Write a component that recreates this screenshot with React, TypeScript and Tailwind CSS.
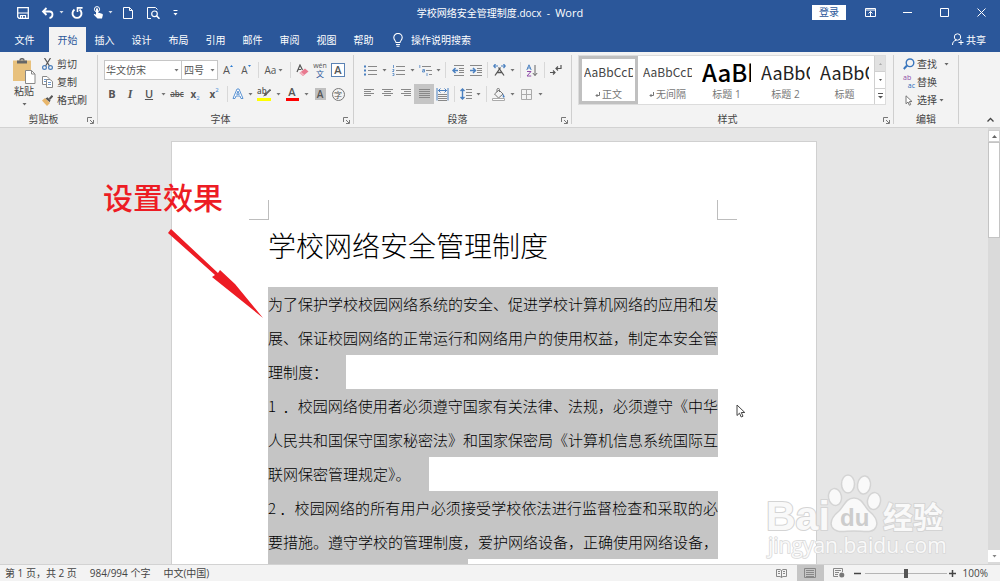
import { useState, type ReactNode } from 'react';
import clsx from 'clsx';

interface ChildrenProps {
  children: ReactNode;
}

interface ToolProps {
  label: string;
  width?: string;
  active?: boolean;
  children: ReactNode;
}

const TABS = ['开始', '插入', '设计', '布局', '引用', '邮件', '审阅', '视图', '帮助'];

const STYLES = [
  { name: '正文', sample: 'AaBbCcDc', size: 'text-[12px] text-[#444]', mark: true },
  { name: '无间隔', sample: 'AaBbCcDc', size: 'text-[12px] text-[#444]', mark: true },
  { name: '标题 1', sample: 'AaBb', size: 'text-[24px] font-medium text-black', mark: false },
  { name: '标题 2', sample: 'AaBbC', size: 'text-[18px] text-[#222]', mark: false },
  { name: '标题', sample: 'AaBbC', size: 'text-[18px] text-[#222]', mark: false },
];

const PARAGRAPHS = [
  [
    '为了保护学校校园网络系统的安全、促进学校计算机网络的应用和发',
    '展、保证校园网络的正常运行和网络用户的使用权益，制定本安全管',
    '理制度：',
  ],
  [
    '1\u00a0 ．校园网络使用者必须遵守国家有关法律、法规，必须遵守《中华',
    '人民共和国保守国家秘密法》和国家保密局《计算机信息系统国际互',
    '联网保密管理规定》。',
  ],
  [
    '2 ．校园网络的所有用户必须接受学校依法进行监督检查和采取的必',
    '要措施。遵守学校的管理制度，爱护网络设备，正确使用网络设备，',
  ],
];

function Svg({ w, h, children }: ChildrenProps & { w: number; h: number }) {
  return (
    <svg width={w} height={h} viewBox={`0 0 ${w} ${h}`} fill="none" stroke="currentColor" aria-hidden="true" className="shrink-0">
      {children}
    </svg>
  );
}

function Caret() {
  return (
    <svg width="5" height="3" viewBox="0 0 5 3" fill="currentColor" aria-hidden="true" className="shrink-0 opacity-80">
      <path d="M.5 0h4L2.500 2.500z" />
    </svg>
  );
}

function Tool({ label, width = 'w-4', active, children }: ToolProps) {
  return (
    <button
      type="button"
      aria-label={label}
      title={label}
      className={clsx('flex h-5 shrink-0 items-center justify-center', width, active && 'bg-[#c5c5c5]')}
    >
      {children}
    </button>
  );
}

function CaretTool({ label }: { label: string }) {
  return (
    <Tool label={label} width="w-2">
      <Caret />
    </Tool>
  );
}

function Divider({ width = 'w-2' }: { width?: string }) {
  return (
    <span className={clsx('flex h-4 shrink-0 justify-center', width)}>
      <span className="w-px bg-[#d8d8d8]" />
    </span>
  );
}

function Row({ children }: ChildrenProps) {
  return <div className="flex h-5 items-center">{children}</div>;
}

function Group({ title, width, launcher = true, children }: ChildrenProps & { title: string; width: string; launcher?: boolean }) {
  return (
    <section aria-label={title} className={clsx('flex shrink-0 pt-[3px]', width)}>
      <div className="flex min-w-0 flex-1 flex-col justify-between">
        {children}
        <div className="flex h-4 items-center">
          <span className="flex-1 text-center">{title}</span>
          {launcher && (
            <button type="button" aria-label={`${title}设置`} className="flex w-[10px] justify-start pt-[3px] text-[#777]">
              <Svg w={7} h={7}>
                <path d="M.5 5V.5H5M3 3l3 3M6.500 3v3.500H3" />
              </Svg>
            </button>
          )}
        </div>
      </div>
      <div className="mb-[3px] w-px bg-[#cfcfcf]" />
    </section>
  );
}

/* lines of 13px wide used by the alignment buttons */
function Lines({ rows }: { rows: [number, number][] }) {
  return (
    <Svg w={13} h={10}>
      {rows.map(([x1, x2], i) => (
        <path key={i} d={`M${x1} ${i * 2 + 0.5}H${x2}`} stroke="#888" />
      ))}
    </Svg>
  );
}

function TitleBar() {
  return (
    <div className="grid h-[27px] grid-cols-[1fr_auto_1fr] pb-[2px] text-white">
      <div className="flex items-center pl-[14px]">
        <Tool label="保存" width="w-[18px]">
          <Svg w={12} h={12}>
            <path d="M.7.700h10.600v10.600H2L.7 10z" strokeWidth="1.300" />
            <path d="M1 6h10M3.500 11V8.500h5V11M5.500 9v2" strokeWidth="1.200" />
          </Svg>
        </Tool>
        <Tool label="撤消" width="w-[30px]">
          <Svg w={13} h={12}>
            <path d="M5.500 1L2 4.500 5.500 8M2 4.500h6.500c4 0 4 6 0 6.500" strokeWidth="1.800" />
          </Svg>
        </Tool>
        <Tool label="撤消选项" width="w-[6px]">
          <span className="-translate-x-1">
            <Caret />
          </span>
        </Tool>
        <Tool label="重复" width="w-[18px]">
          <Svg w={12} h={12}>
            <path d="M3.500 2.600a4.500 4.500 0 1 0 5 0" strokeWidth="1.900" />
            <path d="M6.500 0v5L6.500.900h5z" strokeWidth="1.600" />
          </Svg>
        </Tool>
        <Tool label="触摸/鼠标模式" width="w-[24px]">
          <Svg w={11} h={13}>
            <circle cx="4" cy="3.200" r="2.600" />
            <path d="M3 3.200c0-1.400 2-1.400 2 0V6.500l4 1.200c.8.200 1 1 .8 1.600L9 12.500H4.500L.8 8.800c0-1 1.200-1 2.200 0z" fill="currentColor" stroke="none" />
          </Svg>
        </Tool>
        <span className="-ml-1 flex">
          <CaretTool label="触摸选项" />
        </span>
        <Tool label="新建" width="w-[28px]">
          <Svg w={10} h={12}>
            <path d="M.500.500h6l3 3v8h-9zM6.500.500v3h3" />
          </Svg>
        </Tool>
        <Tool label="打印预览" width="w-[22px]">
          <Svg w={13} h={12}>
            <path d="M4 11.500H.500V.500h8l2 2" />
            <circle cx="7.500" cy="6.800" r="2.800" strokeWidth="1.200" />
            <path d="M9.500 8.800l3 3" strokeWidth="1.600" />
          </Svg>
        </Tool>
        <Tool label="自定义快速访问工具栏" width="w-[22px]">
          <Svg w={5} h={6}>
            <path d="M.5.500h4" />
            <path d="M.5 3h4L2.500 5.500z" fill="currentColor" stroke="none" />
          </Svg>
        </Tool>
      </div>
      <h1 className="self-center whitespace-nowrap">
        学校网络安全管理制度.docx&nbsp; -&nbsp; <span className="text-[11px]">Word</span>
      </h1>
      <div className="flex items-center justify-end">
        <button type="button" className="mr-[6px] h-[15px] w-[34px] bg-white leading-[15px] text-[#2b579a]">
          登录
        </button>
        <Tool label="功能区显示选项" width="w-[37px]">
          <Svg w={11} h={9}>
            <path d="M.5.500h10v8H.500zM.5 2h10M5.500 8V3.500M3.500 5.500l2-2 2 2" />
          </Svg>
        </Tool>
        <Tool label="最小化" width="w-[37px]">
          <Svg w={9} h={1}>
            <path d="M0 .500h9" />
          </Svg>
        </Tool>
        <Tool label="最大化" width="w-[37px]">
          <Svg w={9} h={9}>
            <path d="M.5.500h8v8h-8z" />
          </Svg>
        </Tool>
        <Tool label="关闭" width="w-[37px]">
          <Svg w={9} h={9}>
            <path d="M.5.500l8 8M8.500.500l-8 8" />
          </Svg>
        </Tool>
      </div>
    </div>
  );
}

function TabBar({ active, onSelect }: { active: string; onSelect: (tab: string) => void }) {
  return (
    <nav className="flex h-[25px] items-stretch text-white">
      <button type="button" className="w-[49px]">
        文件
      </button>
      {TABS.map((tab) => (
        <button
          key={tab}
          type="button"
          onClick={() => onSelect(tab)}
          className={clsx('w-[37px]', tab === active && 'bg-[#f3f3f3] text-[#2b579a]')}
        >
          {tab}
        </button>
      ))}
      <button type="button" className="flex items-center gap-2 pl-[11px]">
        <Svg w={10} h={14}>
          <path d="M3 9.500C3 8 .8 7.200.8 4.600a4.200 4.200 0 0 1 8.400 0C9.200 7.200 7 8 7 9.500zM3 11.500h4M3.500 13.300h3" strokeWidth="1.100" />
        </Svg>
        操作说明搜索
      </button>
      <button type="button" className="ml-auto flex items-center gap-[2px] pr-[14px]">
        <Svg w={12} h={13}>
          <circle cx="5.500" cy="4" r="3.200" />
          <path d="M.5 12c0-3 1.500-4.500 4-4.800M9 7v5M6.500 9.500h5" />
        </Svg>
        共享
      </button>
    </nav>
  );
}

function ClipboardGroup() {
  return (
    <Group title="剪贴板" width="w-[98px]">
      <div className="flex">
        <button type="button" className="flex w-[42px] flex-col items-center pt-[3px] pl-[6px] text-[#444]">
          <Svg w={24} h={26}>
            <path d="M1 2.500h18v20.500H1z" fill="#e8c17d" stroke="none" />
            <path d="M5 2.500h10v3H5z" fill="#666" stroke="none" />
            <path d="M8 2.500a2 1.800 0 0 1 4 0" stroke="#666" strokeWidth="1.500" />
            <path d="M13.500 12.500h6l3.500 3.500v9.500h-9.500z" fill="#fff" stroke="#888" />
            <path d="M19.500 12.500V16H23" stroke="#888" />
          </Svg>
          <span className="h-[14px] leading-[14px]">粘贴</span>
          <span className="mt-[5px]">
            <Caret />
          </span>
        </button>
        <div className="flex flex-col">
          <button type="button" className="flex h-[18px] items-center gap-1">
            <Svg w={11} h={12}>
              <path d="M2.500 0l5 8M8.500 0l-5 8" stroke="#555" strokeWidth="1.200" />
              <circle cx="2.500" cy="9.500" r="1.900" stroke="#4a7ebb" strokeWidth="1.200" />
              <circle cx="8.500" cy="9.500" r="1.900" stroke="#4a7ebb" strokeWidth="1.200" />
            </Svg>
            剪切
          </button>
          <button type="button" className="flex h-[18px] items-center gap-1">
            <Svg w={11} h={12}>
              <path d="M.5.500H5l2 2v6H.500z" fill="#fff" stroke="#888" />
              <path d="M2 3.500h3M2 5.500h3" stroke="#6b97cc" />
              <path d="M4.500 3.500H8l2.500 2v6h-6z" fill="#fff" stroke="#888" />
              <path d="M6 6.500h3M6 8.500h3" stroke="#6b97cc" />
            </Svg>
            复制
          </button>
          <button type="button" className="flex h-[18px] items-center gap-1">
            <Svg w={11} h={11}>
              <path d="M0 5.500L3 3l5 5-3 3z" fill="#e8b66b" stroke="none" />
              <path d="M3.500 3.500l2-1.200 3 3-.8 2z" fill="#555" stroke="none" />
              <path d="M7.500 4L10.500.800" stroke="#555" strokeWidth="2" />
            </Svg>
            格式刷
          </button>
        </div>
      </div>
    </Group>
  );
}

function FontGroup() {
  return (
    <Group title="字体" width="w-[256px]">
      <div className="flex flex-col gap-1 pt-[5px] pl-[6px] text-[#555]">
        <Row>
          <label className="relative">
            <span className="sr-only">字体名称</span>
            <select className="h-5 w-[78px] appearance-none border border-[#c6c6c6] bg-white pl-[1px] leading-[18px]">
              <option>华文仿宋</option>
              <option>宋体</option>
            </select>
            <span className="pointer-events-none absolute top-[9px] right-[3px]">
              <Caret />
            </span>
          </label>
          <label className="relative">
            <span className="sr-only">字号</span>
            <select className="h-5 w-9 appearance-none border border-l-0 border-[#c6c6c6] bg-white pl-[2px] leading-[18px]">
              <option>四号</option>
              <option>小四</option>
            </select>
            <span className="pointer-events-none absolute top-[9px] right-[3px]">
              <Caret />
            </span>
          </label>
          <Tool label="增大字号" width="w-5">
            <span className="text-[11px]">A</span>
            <span className="mb-2 text-[#2b7cd3]">
              <Svg w={3} h={2}>
                <path d="M0 2L1.500 0 3 2z" fill="currentColor" stroke="none" />
              </Svg>
            </span>
          </Tool>
          <Tool label="减小字号">
            <span className="text-[10px]">A</span>
            <span className="mb-2 text-[#2b7cd3]">
              <Svg w={3} h={2}>
                <path d="M0 0h3L1.500 2z" fill="currentColor" stroke="none" />
              </Svg>
            </span>
          </Tool>
          <Divider />
          <Tool label="更改大小写" width="w-6">
            <span className="mr-[2px]">Aa</span>
            <Caret />
          </Tool>
          <Divider />
          <Tool label="清除所有格式">
            <Svg w={13} h={13}>
              <path d="M1 8l3-7 2.500 5M2 5.500h3" stroke="#555" strokeWidth="1.200" />
              <path d="M3.500 9L9 4.500l3.500 3L7 12z" fill="#e8798f" stroke="none" />
              <path d="M3.500 9L5 7.700l3.500 3L7 12z" fill="#f3b3bf" stroke="none" />
            </Svg>
          </Tool>
          <Tool label="拼音指南" width="w-5">
            <span className="flex flex-col items-center">
              <span className="text-[7px] leading-[7px]">wén</span>
              <span className="font-['Noto_Sans_CJK_SC',sans-serif] text-[8px] leading-[9px] text-[#2b579a]">文</span>
            </span>
          </Tool>
          <Tool label="字符边框">
            <span className="h-[14px] w-[14px] border border-[#5b83b5] bg-white text-[11px] leading-[12px] font-semibold">A</span>
          </Tool>
        </Row>
        <Row>
          <Tool label="加粗">
            <b className="text-[11px]">B</b>
          </Tool>
          <Tool label="倾斜" width="w-5">
            <i className="font-['Liberation_Serif',serif] text-[12px] font-bold">I</i>
          </Tool>
          <Tool label="下划线" width="w-[18px]">
            <span className="text-[11px] font-semibold underline">U</span>
          </Tool>
          <Tool label="下划线选项" width="w-[10px]">
            <Caret />
          </Tool>
          <Tool label="删除线" width="w-[18px]">
            <span className="text-[8px] font-semibold line-through">abc</span>
          </Tool>
          <Tool label="下标" width="w-[18px]">
            <b>x</b>
            <span className="mt-2 text-[6px] text-[#2b7cd3]">2</span>
          </Tool>
          <Tool label="上标" width="w-5">
            <b>x</b>
            <span className="mb-2 text-[6px] text-[#2b7cd3]">2</span>
          </Tool>
          <Divider width="w-[6px]" />
          <Tool label="文本效果">
            <Svg w={12} h={12}>
              <path d="M1 10.500L5 1h2l4 9.500H9L8 8H4l-1 2.500zM4.700 6.300h2.600L6 3z" fill="#fff" stroke="#5b93d3" />
            </Svg>
          </Tool>
          <CaretTool label="文本效果选项" />
          <Tool label="突出显示" width="w-5">
            <span className="relative flex h-[14px] w-[14px] flex-col justify-between">
              <span className="text-left text-[8px] leading-[8px] font-semibold">ab</span>
              <span className="h-[3px] bg-[#ffff00]" />
              <span className="absolute top-[2px] left-[5px]">
                <Svg w={9} h={8}>
                  <path d="M8.500.500L3 6" stroke="#666" strokeWidth="1.800" />
                  <path d="M3.500 4L1 7.500l4-1.500z" fill="#555" stroke="none" />
                </Svg>
              </span>
            </span>
          </Tool>
          <CaretTool label="突出显示颜色" />
          <Tool label="字体颜色" width="w-5">
            <span className="flex h-[14px] w-[13px] flex-col justify-between">
              <span className="text-[11px] leading-[10px] font-semibold">A</span>
              <span className="h-[3px] bg-[#ff0000]" />
            </span>
          </Tool>
          <CaretTool label="字体颜色选项" />
          <Tool label="字符底纹" width="w-5">
            <span className="h-3 w-[11px] bg-[#bfbfbf] text-[10px] leading-[12px] font-semibold">A</span>
          </Tool>
          <Tool label="带圈字符">
            <span className="h-[13px] w-[13px] rounded-full border border-[#777] text-[8px] leading-[11px]">字</span>
          </Tool>
        </Row>
      </div>
    </Group>
  );
}

function ParagraphGroup() {
  const blue = '#4a80c0';
  return (
    <Group title="段落" width="w-[218px]">
      <div className="flex flex-col gap-1 pt-[5px] pl-[6px] text-[#555]">
        <Row>
          <Tool label="项目符号" width="w-5">
            <Svg w={13} h={11}>
              <path d="M4 1.500h9M4 5.500h9M4 9.500h9" stroke="#888" />
              <path d="M0 1.500h2M0 5.500h2M0 9.500h2" stroke={blue} strokeWidth="2" />
            </Svg>
          </Tool>
          <CaretTool label="项目符号选项" />
          <Tool label="编号" width="w-5">
            <Svg w={13} h={11}>
              <path d="M4 1.500h9M4 5.500h9M4 9.500h9" stroke="#888" />
              <path d="M1.500 0v3M.500 4.500h1.500v1L.500 6.500h1.500M.5 8.500h1.500v2H.500" stroke={blue} strokeWidth=".8" />
            </Svg>
          </Tool>
          <CaretTool label="编号选项" />
          <Tool label="多级列表" width="w-[18px]">
            <Svg w={13} h={11}>
              <path d="M3 1.500h9M7 5.500h6M10 9.500h3" stroke="#888" />
              <path d="M.8 0v3M3.500 4.500h2v2.500h-2V5.700h2M8 8v3" stroke={blue} strokeWidth=".8" />
            </Svg>
          </Tool>
          <CaretTool label="多级列表选项" />
          <Divider width="w-[6px]" />
          <Tool label="减少缩进量" width="w-5">
            <Svg w={12} h={11}>
              <path d="M2 .500h10M7 3.500h5M7 5.500h5M7 7.500h5M2 10.500h10" stroke="#888" />
              <path d="M3.500 3L1 5.500 3.500 8M1 5.500h5" stroke={blue} strokeWidth="1.500" />
            </Svg>
          </Tool>
          <Tool label="增加缩进量">
            <Svg w={12} h={11}>
              <path d="M0 .500h12M7 3.500h5M7 5.500h5M7 7.500h5M0 10.500h12" stroke="#888" />
              <path d="M3 3l2.500 2.500L3 8M0 5.500h5" stroke={blue} strokeWidth="1.500" />
            </Svg>
          </Tool>
          <Divider width="w-[6px]" />
          <Tool label="中文版式" width="w-[18px]">
            <Svg w={13} h={12}>
              <path d="M2 11.500L7.500 3.500M11 11.500L5.500 3.500M4 8.500h5" stroke="#555" strokeWidth="1.300" />
              <path d="M2.500 0L.800 2l1.700 2M.800 2H5M10.500 0l1.700 2-1.700 2M12 2H8" stroke={blue} strokeWidth="1.200" />
            </Svg>
          </Tool>
          <CaretTool label="中文版式选项" />
          <Divider />
          <Tool label="排序">
            <Svg w={12} h={13}>
              <path d="M.8 6L3 .800 5.200 6M1.500 4h3" stroke={blue} />
              <path d="M1 7.500h4L1 12h4.200" stroke="#8e4ba8" />
              <path d="M9 1v10.500M6.800 9L9 11.500 11.200 9" stroke="#666" />
            </Svg>
          </Tool>
          <Divider />
          <Tool label="显示编辑标记">
            <Svg w={12} h={10}>
              <path d="M11 0v3.500H6M8 1.500l-2 2 2 2M0 7.500h5M3 5.500l2 2-2 2" stroke="#555" strokeWidth="1.200" />
            </Svg>
          </Tool>
        </Row>
        <Row>
          <Tool label="左对齐" width="w-[18px]">
            <Lines rows={[[1, 11], [1, 8], [1, 11], [1, 8]]} />
          </Tool>
          <Tool label="居中" width="w-[18px]">
            <Lines rows={[[1, 12], [3, 10], [1, 12], [3, 10]]} />
          </Tool>
          <Tool label="右对齐" width="w-[18px]">
            <Lines rows={[[2, 12], [5, 12], [2, 12], [5, 12]]} />
          </Tool>
          <Tool label="两端对齐" width="w-5" active>
            <Lines rows={[[1, 12], [1, 12], [1, 12], [1, 12], [1, 12]]} />
          </Tool>
          <Tool label="分散对齐">
            <Svg w={13} h={13}>
              <path d="M1 0v12.500M12 0v12.500" stroke={blue} />
              <path d="M2 2.500h9M4.500.500l-2 2 2 2M8.500.500l2 2-2 2" stroke={blue} />
              <path d="M2 6.500h9M2 8.500h9M2 10.500h9M2 12.500h9" stroke="#888" />
            </Svg>
          </Tool>
          <Divider />
          <Tool label="行距">
            <Svg w={12} h={12}>
              <path d="M2.500 1v10M.5 3l2-2 2 2M.5 9l2 2 2-2" stroke={blue} strokeWidth="1.400" />
              <path d="M6 1.500h6M6 4.500h6M6 7.500h6M6 10.500h6" stroke="#888" />
            </Svg>
          </Tool>
          <CaretTool label="行距选项" />
          <Divider />
          <Tool label="底纹" width="w-[18px]">
            <Svg w={14} h={13}>
              <path d="M2.500 6L7 2l4 4-4.500 4zM5 4V1.500C5 0 7.500 0 7.500 1.500V4" stroke="#777" />
              <path d="M11 5.500l1.700 3c0 1.500-2 1.500-2 0z" fill={blue} stroke="none" />
              <path d="M.5 10.500h12v2H.500z" fill="#fff" stroke="#aaa" />
            </Svg>
          </Tool>
          <CaretTool label="底纹选项" />
          <Tool label="边框" width="w-5">
            <Svg w={11} h={11}>
              <path d="M.5.500h10v10H.500zM5.500.500v10M.5 5.500h10" stroke="#aaa" />
            </Svg>
          </Tool>
          <CaretTool label="边框选项" />
        </Row>
      </div>
    </Group>
  );
}

function StylesGroup() {
  return (
    <Group title="样式" width="w-[322px]">
      <div className="ml-[6px] flex h-[50px] w-[308px] border border-[#dcdcdc] bg-white">
        {STYLES.map((style, i) => (
          <button
            key={style.name}
            type="button"
            className={clsx(
              'flex h-12 w-[59px] shrink-0 flex-col justify-between overflow-hidden border-[3px] px-[2px]',
              i === 0 ? 'border-[#c0c0c0]' : 'border-transparent',
            )}
          >
            <span
              className={clsx(
                "flex h-[26px] w-full items-center overflow-hidden font-['Noto_Sans_CJK_SC',sans-serif] leading-[26px] whitespace-nowrap",
                style.size,
              )}
            >
              {style.sample}
            </span>
            <span className="flex h-[14px] w-full items-center justify-center gap-[2px] text-[#777]">
              {style.mark && (
                <Svg w={5} h={5}>
                  <path d="M4.500 0v3.500H1M2.500 2L1 3.500 2.500 5" />
                </Svg>
              )}
              {style.name}
            </span>
          </button>
        ))}
        <div className="flex flex-1 flex-col border-l border-[#d0d0d0] text-[#555]">
          <button type="button" aria-label="上一行" className="flex flex-1 items-center justify-center bg-[#e1e1e1] text-[#aaa]">
            <Svg w={3} h={2}>
              <path d="M0 2L1.500 0 3 2z" fill="currentColor" stroke="none" />
            </Svg>
          </button>
          <button type="button" aria-label="下一行" className="flex flex-1 items-center justify-center border-y border-[#d0d0d0]">
            <Svg w={3} h={2}>
              <path d="M0 0h3L1.500 2z" fill="currentColor" stroke="none" />
            </Svg>
          </button>
          <button type="button" aria-label="其他样式" className="flex flex-1 items-center justify-center">
            <Svg w={5} h={6}>
              <path d="M0 .500h5" />
              <path d="M0 3h5L2.500 5.500z" fill="currentColor" stroke="none" />
            </Svg>
          </button>
        </div>
      </div>
    </Group>
  );
}

function EditingGroup() {
  return (
    <Group title="编辑" width="w-[65px]" launcher={false}>
      <div className="flex flex-col pl-[9px]">
        <button type="button" className="flex h-[18px] items-center gap-[2px]">
          <Svg w={12} h={12}>
            <circle cx="7" cy="4.800" r="3.800" stroke="#3a76bd" strokeWidth="1.400" />
            <path d="M4 7.500L.800 11" stroke="#3a76bd" strokeWidth="2" />
          </Svg>
          查找
          <span className="ml-[5px]">
            <Caret />
          </span>
        </button>
        <button type="button" className="flex h-[18px] items-center gap-[2px]">
          <span className="flex w-3 flex-col text-[7px] leading-[8px]">
            <span className="text-left text-[#8e4ba8]">ab</span>
            <span className="text-right text-[#2b6cb8]">ac</span>
          </span>
          替换
        </button>
        <button type="button" className="flex h-[18px] items-center gap-[2px]">
          <span className="flex w-3 justify-center text-[#777]">
            <Svg w={8} h={11}>
              <path d="M1 .800v8l2-1.800 1.300 3.200 1.400-.600L4.400 6.500H7z" fill="#fff" />
            </Svg>
          </span>
          选择
          <Caret />
        </button>
      </div>
    </Group>
  );
}

function Ribbon() {
  return (
    <div className="flex h-[76px] border-b border-[#d2d2d2] bg-[#f3f3f3] text-[#444]">
      <ClipboardGroup />
      <FontGroup />
      <ParagraphGroup />
      <StylesGroup />
      <EditingGroup />
      <button type="button" aria-label="折叠功能区" className="mt-auto mr-[6px] mb-[5px] ml-auto">
        <Svg w={7} h={5}>
          <path d="M.5 4.500l3-3 3 3" strokeWidth="1.300" />
        </Svg>
      </button>
    </div>
  );
}

function SelectedParagraph({ lines }: { lines: string[] }) {
  return (
    <p>
      {lines.map((line) => (
        <span
          key={line}
          className={clsx(
            'block h-[34px] bg-[#c5c5c5] whitespace-nowrap',
            line.length > 20 ? 'text-justify [text-align-last:justify]' : 'w-fit pr-[18px]',
          )}
        >
          {line}
        </span>
      ))}
    </p>
  );
}

function Annotation() {
  return (
    <div className="absolute top-[32px] -left-[69px] text-[#ed1c24]">
      <p className="text-[30px] leading-[44px] font-medium whitespace-nowrap">设置效果</p>
      <svg width="96" height="90" viewBox="0 0 96 90" fill="currentColor" aria-hidden="true" className="mt-[11px] ml-[65px]">
        <path d="M3 0L50 44l2-3L67 55 95 89 59 60 44 48l3-2L0 4z" />
      </svg>
    </div>
  );
}

function Watermark() {
  return (
    <svg width="184" height="92" viewBox="0 0 184 92" aria-hidden="true" className="pointer-events-none absolute right-[51px] bottom-0">
      <g fill="#f9f9f9" stroke="#d4d4d4" strokeWidth="1.500">
        <ellipse cx="70" cy="25" rx="6.500" ry="8.500" transform="rotate(-10 70 25)" />
        <ellipse cx="83" cy="12" rx="6.500" ry="9" />
        <ellipse cx="99" cy="13" rx="6.500" ry="9" transform="rotate(8 99 13)" />
        <ellipse cx="109" cy="29" rx="6.500" ry="8.500" transform="rotate(10 109 29)" />
        <path d="M89 26c8 0 10 8 15 13 6 5 10 10 7 16-3 7-12 4-22 4s-18 3-22-4c-3-6 1-11 7-16 5-5 7-13 15-13z" />
      </g>
      <g fill="#f9f9f9" stroke="#d4d4d4" strokeWidth="2" paintOrder="stroke" strokeLinejoin="round" className="font-bold">
        <text x="1" y="58" fontSize="41" className="font-['Liberation_Sans',sans-serif]">
          Bai
        </text>
        <text x="75" y="54" fontSize="24" fill="#cdcdcd" stroke="none" className="font-['Liberation_Sans',sans-serif]">
          du
        </text>
        <text x="118" y="56" fontSize="30" className="font-['Noto_Sans_CJK_SC',sans-serif]">
          经验
        </text>
      </g>
      <text x="3" y="81" fontSize="21" fill="#f9f9f9" stroke="#d8d8d8" strokeWidth="1.500" paintOrder="stroke" className="font-['Open_Sans',sans-serif]">
        jingyan.baidu.com
      </text>
    </svg>
  );
}

function Document() {
  return (
    <main className="relative flex min-h-0 flex-1 overflow-hidden bg-[#e6e6e6]">
      <div className="min-w-0 flex-1 overflow-hidden pt-[13px]">
        <article className="relative mx-auto h-[900px] w-[646px] border border-[#d0d0d0] bg-white pt-[58px] pr-[98px] pl-[96px] font-['Noto_Sans_CJK_SC',sans-serif] text-black">
          <div className="-mx-[19px] flex justify-between">
            <span className="h-5 w-5 border-r border-b border-[#bdbdbd]" />
            <span className="h-5 w-5 border-b border-l border-[#bdbdbd]" />
          </div>
          <h2 className="mb-[17px] text-[28px] leading-[50px] font-light">学校网络安全管理制度</h2>
          <div className="text-[15px] leading-[34px] font-light">
            {PARAGRAPHS.map((lines) => (
              <SelectedParagraph key={lines[0]} lines={lines} />
            ))}
            <div className="h-[34px] w-[200px] bg-[#c5c5c5]" />
          </div>
          <Annotation />
          <svg width="10" height="14" viewBox="0 0 10 14" fill="#fff" stroke="#444" aria-hidden="true" className="absolute top-[262px] left-[564px]">
            <path d="M1 1v10.500l2.500-2.300L5.200 13l1.800-.800-1.700-3.700H8.800z" />
          </svg>
        </article>
      </div>
      <div className="flex w-3 flex-col bg-[#dadada] py-[2px] text-[#666]">
        <button type="button" aria-label="向上滚动" className="flex h-3 items-center justify-center border border-[#cfcfcf] bg-white">
          <Svg w={5} h={3}>
            <path d="M0 3L2.500 0 5 3z" fill="currentColor" stroke="none" />
          </Svg>
        </button>
        <div className="h-24 border border-[#c4c4c4] bg-white" />
        <button type="button" aria-label="向下滚动" className="mt-auto flex h-3 items-center justify-center bg-white">
          <Caret />
        </button>
      </div>
      <Watermark />
    </main>
  );
}

function StatusBar() {
  const [zoom, setZoom] = useState(100);

  return (
    <footer className="flex h-[17px] items-center border-t border-[#d2d2d2] bg-[#f3f3f3] text-[#444]">
      <span className="pl-[5px]">第 1 页，共 2 页</span>
      <span className="pl-[13px]">984/994 个字</span>
      <span className="pl-[13px]">中文(中国)</span>
      <div className="ml-auto flex items-center pr-3">
        <Tool label="阅读视图" width="w-[30px]">
          <Svg w={11} h={9}>
            <path d="M5.500 1.500L4 .500H.500v7H4l1.500 1 1.500-1h3.500v-7H7zM5.500 1.500v7M2 2.500h2M2 4.500h2M7 2.500h2M7 4.500h2" stroke="#888" />
          </Svg>
        </Tool>
        <button type="button" aria-label="页面视图" className="flex h-4 w-[27px] items-center justify-center bg-[#c5c5c5]">
          <Svg w={12} h={10}>
            <path d="M.5.500h11v9H.500zM2 2.500h8M2 4.500h8M2 6.500h8M2 8.500h8" stroke="#888" />
          </Svg>
        </button>
        <Tool label="Web 版式视图" width="w-[30px]">
          <Svg w={12} h={10}>
            <path d="M5 8.500H.500v-8h9V4M2 2.500h6M2 4.500h4M2 6.500h3" stroke="#888" />
            <circle cx="8.800" cy="7" r="2.500" fill="#777" stroke="none" />
          </Svg>
        </Tool>
        <button type="button" aria-label="缩小" className="flex w-[11px] justify-start">
          <Svg w={7} h={7}>
            <path d="M0 3.500h7" strokeWidth="1.500" />
          </Svg>
        </button>
        <input
          type="range"
          aria-label="缩放"
          min={10}
          max={190}
          value={zoom}
          onChange={(e) => setZoom(Number(e.target.value))}
          className="h-px w-[82px] appearance-none bg-[#b5b5b5] [&::-webkit-slider-thumb]:h-[9px] [&::-webkit-slider-thumb]:w-1 [&::-webkit-slider-thumb]:appearance-none [&::-webkit-slider-thumb]:bg-[#555]"
        />
        <button type="button" aria-label="放大" className="flex w-[16px] justify-start pl-[2px]">
          <Svg w={7} h={7}>
            <path d="M0 3.500h7M3.500 0v7" strokeWidth="1.500" />
          </Svg>
        </button>
        <span>{zoom}%</span>
      </div>
    </footer>
  );
}

export default function App() {
  const [tab, setTab] = useState('开始');

  return (
    <div className="flex h-screen flex-col overflow-hidden font-['Open_Sans','Noto_Sans_CJK_SC',sans-serif] text-[10px] leading-[14px]">
      <header className="bg-[#2b579a]">
        <TitleBar />
        <TabBar active={tab} onSelect={setTab} />
      </header>
      <Ribbon />
      <Document />
      <StatusBar />
    </div>
  );
}
